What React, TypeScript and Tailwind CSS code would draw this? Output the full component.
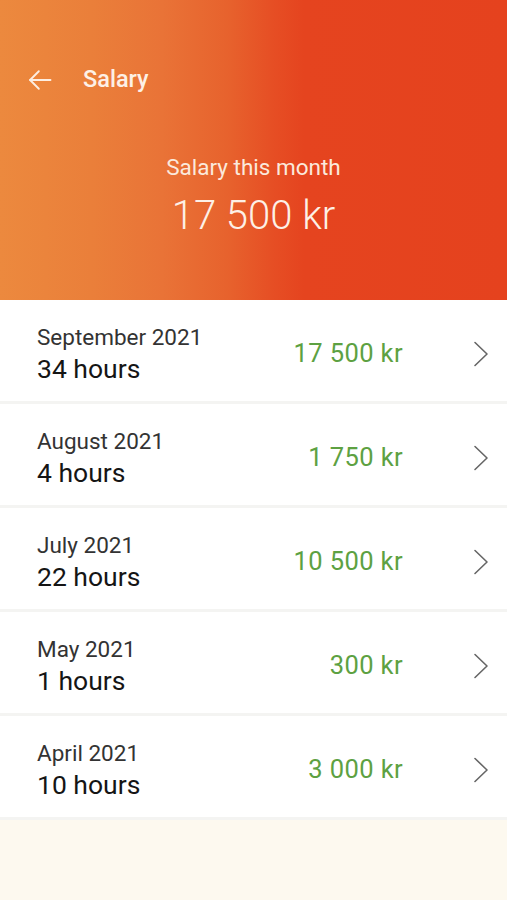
import React from "react";

const rows = [
  { month: "September 2021", hours: "34 hours", amount: "17 500 kr" },
  { month: "August 2021", hours: "4 hours", amount: "1 750 kr" },
  { month: "July 2021", hours: "22 hours", amount: "10 500 kr" },
  { month: "May 2021", hours: "1 hours", amount: "300 kr" },
  { month: "April 2021", hours: "10 hours", amount: "3 000 kr" },
];

export default function App() {
  return (
    <div className="w-[507px] h-[900px] bg-[#fdf9ef] flex flex-col font-['Roboto',sans-serif]">
      <div className="h-[300px] shrink-0 flex flex-col bg-[linear-gradient(to_right,#ec893e_0%,#ea7f3a_18%,#e97337_32%,#e7622d_45%,#e64e24_54%,#e5441f_60%,#e5421e_100%)]">
        <div className="flex items-center h-[40px] mt-[60px] pl-[26px]">
          <svg width="28" height="28" viewBox="0 0 24 24" fill="none" stroke="#fdeee2" strokeWidth="1.6" strokeLinecap="round" strokeLinejoin="round">
            <path d="M21 12H3.5" />
            <path d="M11 4.5L3.5 12L11 19.5" />
          </svg>
          <span className="ml-[29px] text-[23.5px] font-medium text-[#fdf0e6] leading-none">Salary</span>
        </div>
        <div className="mt-[56px] flex flex-col items-center">
          <span className="text-[22.5px] text-[#fbe9dc] leading-none">Salary this month</span>
          <span className="mt-[17px] text-[40px] font-light text-[#fdf0e6] leading-none">17 500 kr</span>
        </div>
      </div>
      <div className="flex flex-col">
        {rows.map((r) => (
          <div key={r.month} className="h-[104px] bg-white border-b-[3px] border-[#f4f4f2] flex items-center pt-[6px] pl-[37px] pr-[18px]">
            <div className="flex flex-col flex-1">
              <span className="text-[22.5px] text-[#333333] leading-[28px]">{r.month}</span>
              <span className="text-[26.5px] text-[#151515] leading-[32px] mt-[2px]">{r.hours}</span>
            </div>
            <span className="text-[25.5px] tracking-[0.4px] text-[#5da142] mr-[70px]">{r.amount}</span>
            <svg width="16" height="26" viewBox="0 0 16 26" fill="none" stroke="#666666" strokeWidth="1.6" strokeLinecap="round" strokeLinejoin="round">
              <path d="M2 1.5L14 13L2 24.5" />
            </svg>
          </div>
        ))}
      </div>
    </div>
  );
}
